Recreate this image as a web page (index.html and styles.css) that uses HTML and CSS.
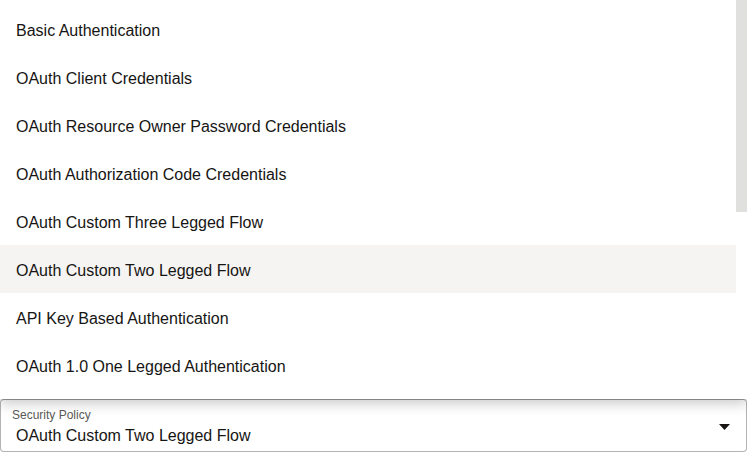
FILE: index.html
```html
<!DOCTYPE html>
<html lang="en">
<head>
    <meta charset="UTF-8">
    <meta name="viewport" content="width=device-width, initial-scale=1.0">
    <title>Security Policy</title>
    <link rel="stylesheet" href="styles.css">
</head>
<body>
<div class="picker">
    <div class="dropdown">
        <ul class="options">
            <li class="option">Basic Authentication</li>
            <li class="option">OAuth Client Credentials</li>
            <li class="option">OAuth Resource Owner Password Credentials</li>
            <li class="option">OAuth Authorization Code Credentials</li>
            <li class="option">OAuth Custom Three Legged Flow</li>
            <li class="option hover">OAuth Custom Two Legged Flow</li>
            <li class="option">API Key Based Authentication</li>
            <li class="option">OAuth 1.0 One Legged Authentication</li>
        </ul>
        <div class="scrollbar">
            <div class="thumb"></div>
        </div>
    </div>

    <!-- the closed select under the open list -->
    <div class="select">
        <div class="select-text">
            <span class="select-label">Security Policy</span>
            <span class="select-value">OAuth Custom Two Legged Flow</span>
        </div>
        <svg class="caret" width="11" height="6" viewBox="0 0 11 6">
            <path d="M0 0 H11 L5.5 6 Z" fill="#161513"/>
        </svg>
    </div>
</div>
</body>
</html>
```

FILE: styles.css
```css
body, html {
    margin: 0;
    height: 100%;
    font-family: "Liberation Sans", Arial, sans-serif;
    color: #161513;
    background: #fff;
}
.picker {
    width: 747px;
    display: flex;
    flex-direction: column;
}
.dropdown {
    height: 399px;
    display: flex;
    overflow: hidden;
    background: #fff;
    position: relative;
    z-index: 1;
    box-shadow: 0 5px 12px rgba(0,0,0,0.2);
}
.options {
    list-style: none;
    margin: 0;
    padding: 5px 0 0 0;
    flex: 1;
}
.option {
    box-sizing: border-box;
    height: 48px;
    display: flex;
    align-items: center;
    padding: 3px 0 0 16px;
    font-size: 16px;
}
.option.hover {
    background-color: #f5f4f2;
}
.scrollbar {
    width: 11px;
    flex-shrink: 0;
}
.thumb {
    height: 212px;
    background-color: #e0e0df;
}
.select {
    box-sizing: border-box;
    height: 53px;
    border: 1px solid #b3b3b3;
    border-top-color: #9c9c9c;
    border-radius: 4px;
    display: flex;
    align-items: center;
    padding: 0 16px 0 11px;
}
.select-text {
    flex: 1;
    align-self: stretch;
    display: flex;
    flex-direction: column;
    padding-top: 7px;
}
.select-label {
    font-size: 12px;
    color: #5b5a58;
    line-height: 16px;
}
.select-value {
    font-size: 16px;
    line-height: 20px;
    margin-top: 3px;
    padding-left: 4px;
}
.caret {
    display: block;
    margin-top: 3px;
}
```
